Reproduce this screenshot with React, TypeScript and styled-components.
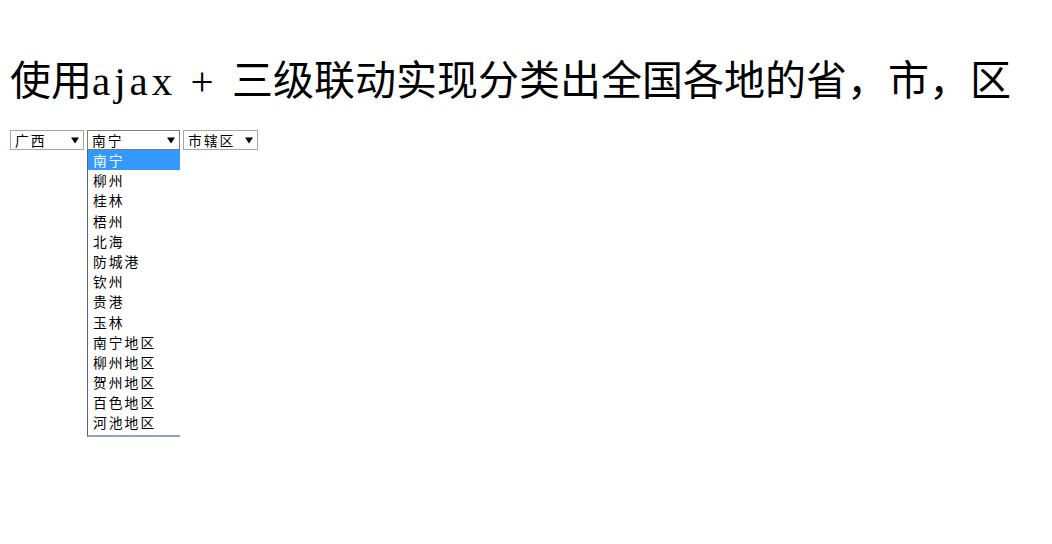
import React from 'react';
import styled, { createGlobalStyle } from 'styled-components';

const GlobalStyle = createGlobalStyle`
    html, body {
        margin: 0;
        padding: 0;
        background: #ffffff;
    }
    body {
        font-family: "Noto Sans CJK SC", "Liberation Sans", sans-serif;
        color: #000000;
    }
`

const Page = styled.div`
    box-sizing: border-box;
    min-height: 100vh;
    padding: 53px 0 0 10px;
`

const Title = styled.h1`
    margin: 0;
    font-family: "Liberation Serif", "Noto Sans CJK SC", serif;
    font-weight: normal;
    font-size: 41px;
    line-height: 48px;
    white-space: nowrap;
    color: #000000;
`

const Latin = styled.span`
    font-family: "Liberation Serif", serif;
    letter-spacing: 4px;
    white-space: pre;
`

const Cjk = styled.span`
    font-family: "Noto Sans CJK SC", sans-serif;
`

const SelectRow = styled.div`
    display: flex;
    align-items: flex-start;
    gap: 3px;
    margin-top: 25px;
`

const SelectWrap = styled.div`
    position: relative;
`

const SelectBox = styled.div<{ $width: number; $active?: boolean }>`
    box-sizing: border-box;
    width: ${props => props.$width}px;
    height: 20px;
    display: flex;
    align-items: center;
    justify-content: space-between;
    padding: 0 4px 0 4px;
    border: 1px solid ${props => props.$active ? '#7b7b7b' : '#a6a6a6'};
    background: #ffffff;
    font-size: 13.8px;
    letter-spacing: 2px;
    line-height: 18px;
    white-space: nowrap;
    color: #000000;
`

const Arrow = styled.svg`
    flex: none;
    width: 8px;
    height: 7px;
`

const DropList = styled.div`
    position: absolute;
    top: 20px;
    left: 0;
    box-sizing: border-box;
    width: 93px;
    padding: 0 0 2px 0;
    background: #ffffff;
    border-left: 1px solid #56647f;
    border-bottom: 2px solid #8ea2c4;
    z-index: 5;
`

const DropItem = styled.div<{ $selected?: boolean }>`
    height: 20.2px;
    padding-left: 5px;
    font-size: 13.8px;
    letter-spacing: 2px;
    line-height: 20px;
    white-space: nowrap;
    background: ${props => props.$selected ? '#3399ff' : 'transparent'};
    color: ${props => props.$selected ? '#ffffff' : '#000000'};
`

const cities = [
    '南宁', '柳州', '桂林', '梧州', '北海', '防城港', '钦州',
    '贵港', '玉林', '南宁地区', '柳州地区', '贺州地区', '百色地区', '河池地区',
];

function DownArrow() {
    return (
        <Arrow viewBox="0 0 8 7">
            <polygon points="0,0.5 8,0.5 4,6.5" fill="#000000" />
        </Arrow>
    );
}

export default function App() {
    const city = '南宁';

    return (
        <Page>
            <GlobalStyle />
            <Title>
                <Cjk>使用</Cjk>
                <Latin>ajax + </Latin>
                <Cjk>三级联动实现分类出全国各地的省，市，区</Cjk>
            </Title>
            <SelectRow>
                <SelectWrap>
                    <SelectBox $width={74}>
                        <span>广西</span>
                        <DownArrow />
                    </SelectBox>
                </SelectWrap>
                <SelectWrap>
                    <SelectBox $width={93} $active>
                        <span>{city}</span>
                        <DownArrow />
                    </SelectBox>
                    <DropList>
                        {cities.map(name => (
                            <DropItem key={name} $selected={name === city}>{name}</DropItem>
                        ))}
                    </DropList>
                </SelectWrap>
                <SelectWrap>
                    <SelectBox $width={75}>
                        <span>市辖区</span>
                        <DownArrow />
                    </SelectBox>
                </SelectWrap>
            </SelectRow>
        </Page>
    );
}
